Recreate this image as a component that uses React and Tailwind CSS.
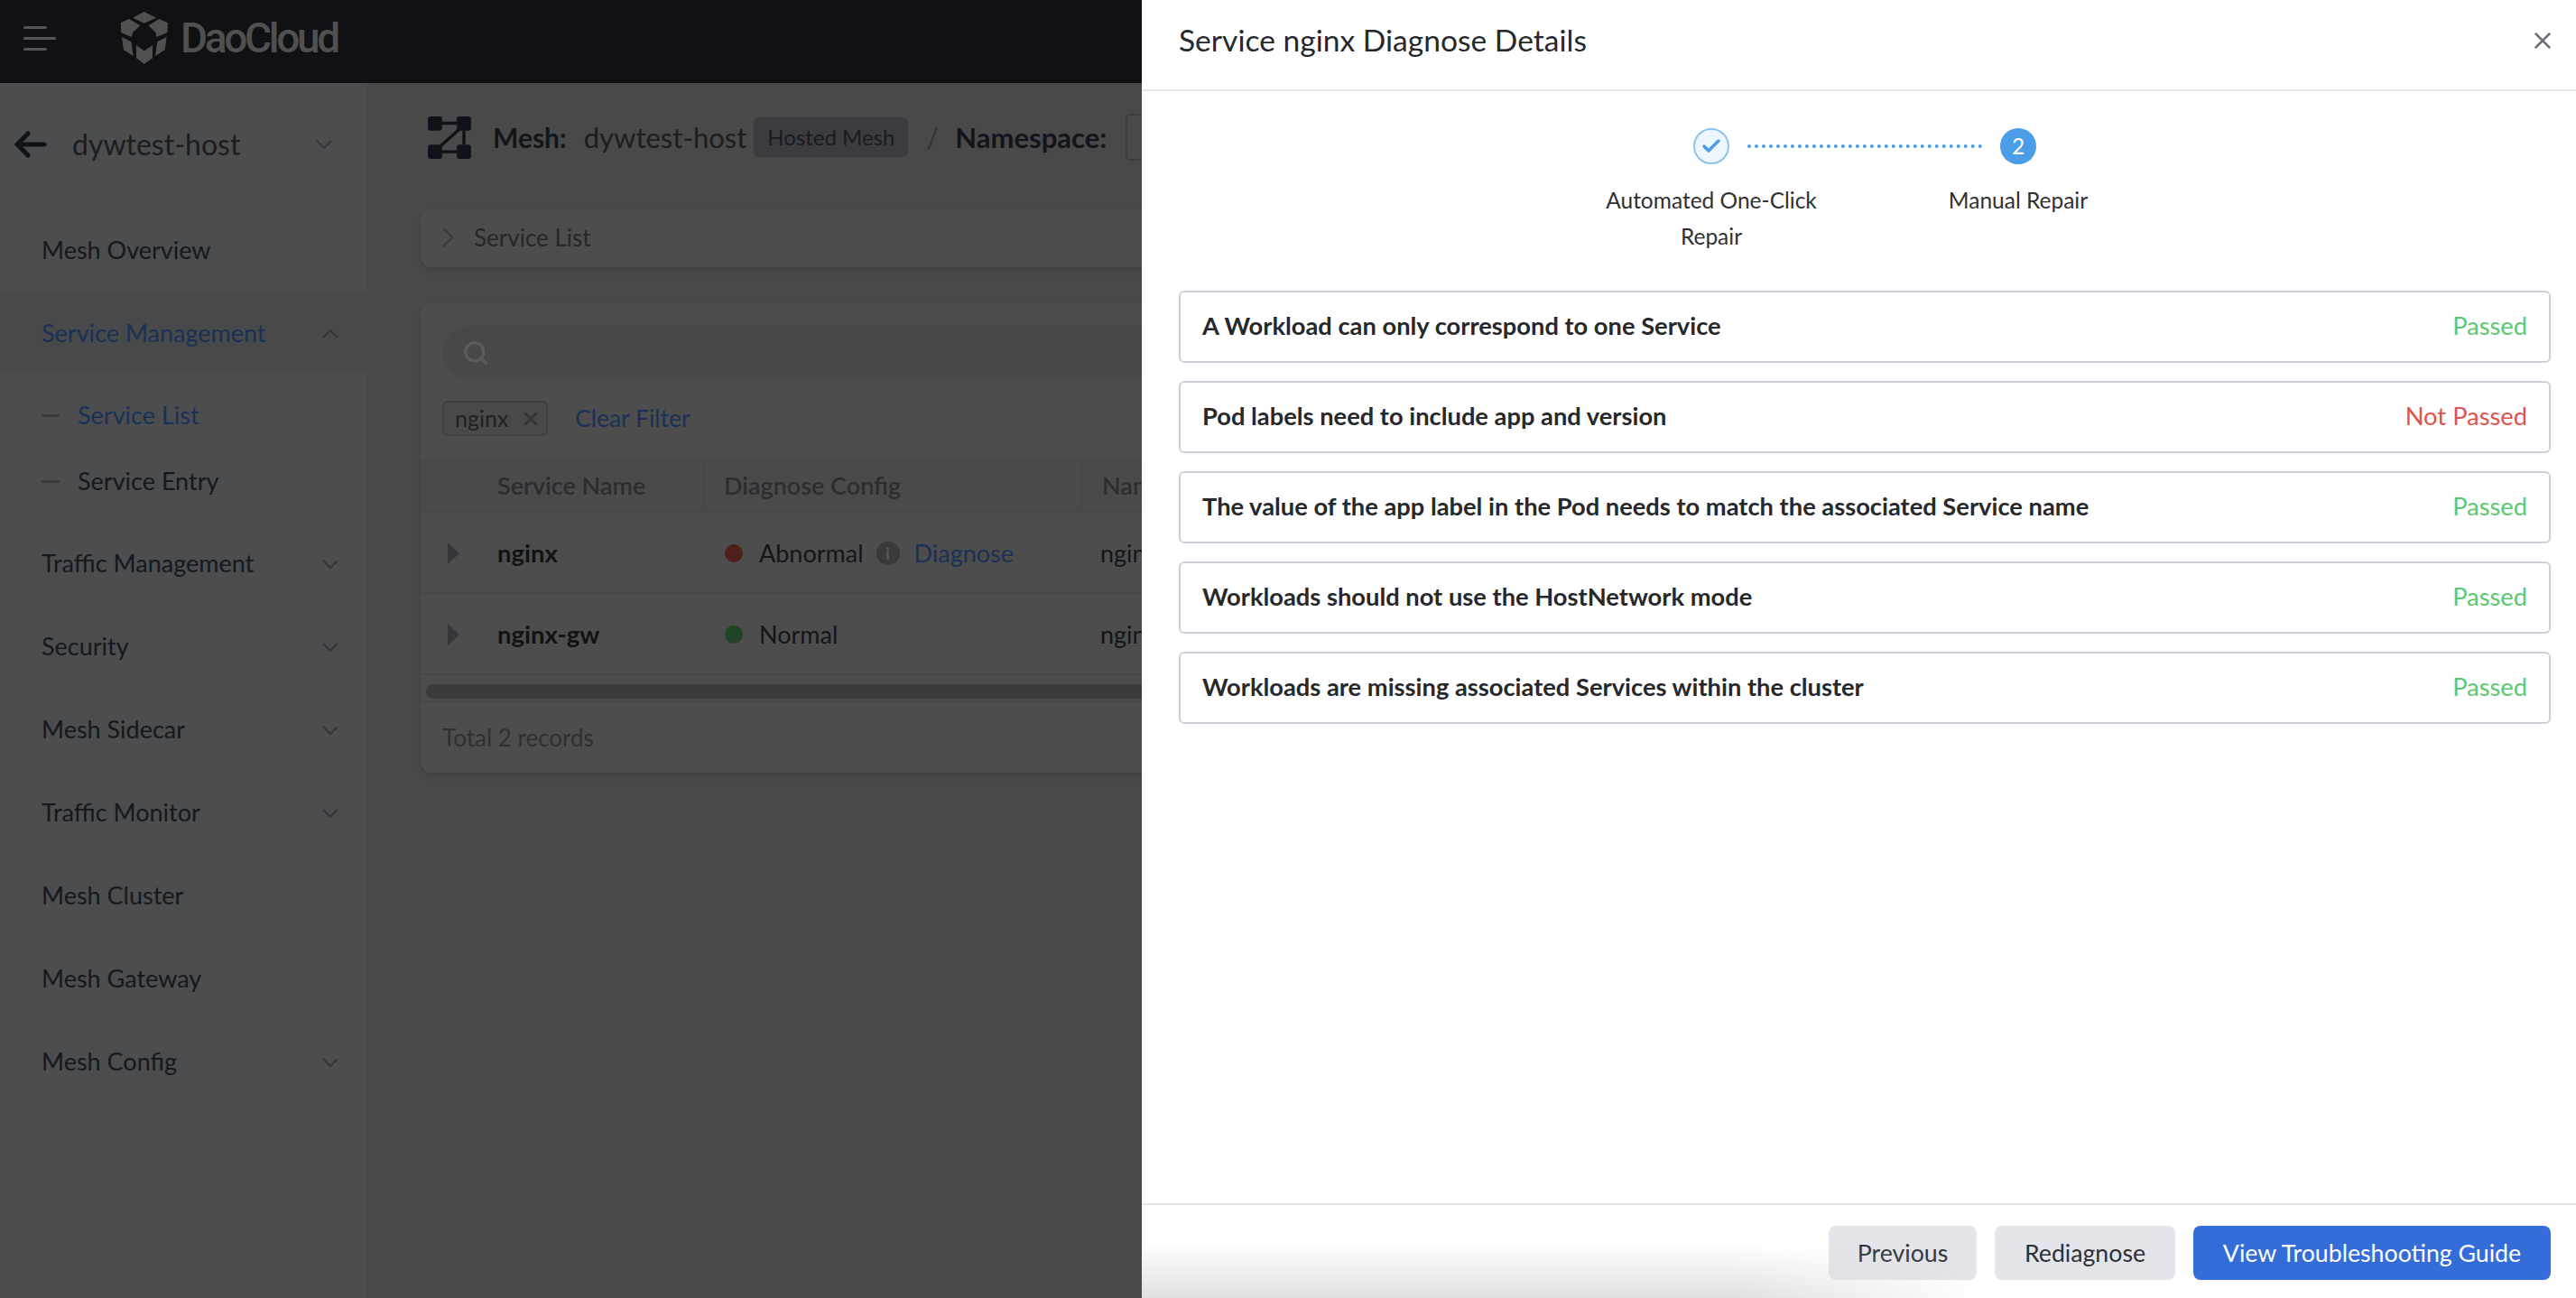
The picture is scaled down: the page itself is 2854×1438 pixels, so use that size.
import React from 'react';
import { Search, X, Check } from 'lucide-react';

const navBelow = [
  { label: 'Traffic Management', arrow: true },
  { label: 'Security', arrow: true },
  { label: 'Mesh Sidecar', arrow: true },
  { label: 'Traffic Monitor', arrow: true },
  { label: 'Mesh Cluster' },
  { label: 'Mesh Gateway' },
  { label: 'Mesh Config', arrow: true },
];

const checks = [
  { text: 'A Workload can only correspond to one Service', ok: true },
  { text: 'Pod labels need to include app and version', ok: false },
  { text: 'The value of the app label in the Pod needs to match the associated Service name', ok: true },
  { text: 'Workloads should not use the HostNetwork mode', ok: true },
  { text: 'Workloads are missing associated Services within the cluster', ok: true },
];

const Chevron = ({ up, className }) => (
  <svg width="18" height="10" viewBox="0 0 18 10" className={className}>
    <polyline
      points={up ? '1,9 9,1 17,9' : '1,1 9,9 17,1'}
      fill="none"
      stroke="#35373a"
      strokeWidth="2"
    />
  </svg>
);

const Logo = () => (
  <svg width="54" height="60" viewBox="38 36 162 178" fill="#505050">
    <polygon points="118,38 158,58 118,76 80,58" />
    <polygon points="40,75 68,62 105,84 80,108 76,122 42,108" />
    <polygon points="197,75 168,62 132,84 157,108 158,122 195,108" />
    <polygon points="44,122 75,138 82,185 50,165" />
    <polygon points="193,122 162,138 155,185 187,165" />
    <polygon points="92,150 118,168 146,150 146,192 118,212 92,192" />
  </svg>
);

const MeshIcon = () => (
  <svg width="48" height="47" viewBox="38 26 140 138" fill="#0f1218" stroke="none">
    <rect x="38" y="26" width="46" height="46" rx="8" />
    <rect x="132" y="26" width="46" height="46" rx="8" />
    <rect x="38" y="118" width="46" height="46" rx="8" />
    <rect x="132" y="118" width="46" height="46" rx="8" />
    <path d="M84 48H132M84 141H132M142 66L70 130M155 72V118" stroke="#0f1218" strokeWidth="10" fill="none" />
  </svg>
);

const NavRow = ({ label, arrow }) => (
  <div className="h-[92px] pl-[46px] pr-[31px] pt-[3px] flex items-center justify-between text-[#15181d]">
    <span>{label}</span>
    {arrow && <Chevron />}
  </div>
);

const Sidebar = () => (
  <aside className="w-[406px] shrink-0 bg-[#4b4d4f] text-[27px]">
    <div className="h-[138px] mx-4 w-[360px] border-b-2 border-[#484a4c] flex items-center justify-between pr-2">
      <svg width="36" height="30" viewBox="0 0 36 30" fill="none" stroke="#0f1218" strokeWidth="5" strokeLinecap="round" strokeLinejoin="round">
        <path d="M33 15H4M15 3L3 15L15 27" />
      </svg>
      <span className="ml-7 flex-1 text-[32px] text-[#1b1d21]">dywtest-host</span>
      <Chevron />
    </div>
    <NavRow label="Mesh Overview" />
    <div className="h-[92px] bg-[#47494b] pl-[46px] pr-[31px] pt-[3px] flex items-center justify-between text-[#1a3155]">
      <span>Service Management</span>
      <Chevron up />
    </div>
    <div className="py-[9px] pb-[10px]">
      <div className="h-[72px] pl-[46px] pt-[3px] flex items-center text-[#1a3155]">
        <span className="w-5 h-[3px] bg-[#393b3d] mr-5" />
        Service List
      </div>
      <div className="h-[72px] pl-[46px] pt-[5px] flex items-center text-[#15181d]">
        <span className="w-5 h-[3px] bg-[#393b3d] mr-5" />
        Service Entry
      </div>
    </div>
    {navBelow.map((item) => (
      <NavRow key={item.label} label={item.label} arrow={item.arrow} />
    ))}
  </aside>
);

const ServiceRow = ({ name, ns, children }) => (
  <div className="h-[90px] pt-[2px] flex items-center border-b-2 border-[#484848] text-[27px]">
    <div className="w-[85px] pl-[30px] shrink-0">
      <span className="block w-0 h-0 border-y-[12px] border-y-transparent border-l-[13px] border-l-[#34363a]" />
    </div>
    <div className="w-[229px] shrink-0 font-bold text-[#111214] text-[27.5px]">{name}</div>
    <div className="w-[419px] shrink-0 pl-[23px] flex items-center text-[#141518]">{children}</div>
    <div className="pl-[20px] text-[#141518]">{ns}</div>
  </div>
);

const MainPanel = () => (
  <main className="flex-1 min-w-0 bg-[#494949] pl-[60px] pr-7">
    <div className="h-[140px] pl-[8px] pb-5 flex items-center gap-[24px] text-[#12151b]">
      <MeshIcon />
      <div className="flex items-center text-[31px]">
        <span className="font-bold text-[30px]">Mesh:</span>
        <span className="ml-[19px] text-[#1b1d21]">dywtest-host</span>
        <span className="ml-[8px] h-11 w-[171px] rounded-md bg-[#3b3c40] flex items-center justify-center text-[24px] text-[#191b1f]">
          Hosted Mesh
        </span>
        <span className="ml-[20px] text-[#333]">/</span>
        <span className="ml-[18px] font-bold">Namespace:</span>
        <span className="ml-[21px] w-[60px] h-[52px] rounded-md border-2 border-[#3d3d3d]" />
      </div>
    </div>
    <div className="h-16 rounded-xl bg-[#4d4d4d] shadow-md flex items-center pl-[24px] pb-[2px] gap-[23px] text-[26px] text-[#26272a]">
      <svg width="12" height="24" viewBox="0 0 12 24" fill="none" stroke="#3a3a3a" strokeWidth="2">
        <path d="M1 2L11 12L1 22" />
      </svg>
      Service List
    </div>
    <div className="mt-10 h-[520px] rounded-xl bg-[#4d4d4d] shadow-md overflow-hidden">
      <div className="pt-[25px] px-[24px]">
        <div className="h-[59px] rounded-full bg-[#484848] flex items-center pl-[22px]">
          <Search size={30} color="#5c5c5c" strokeWidth={2.5} />
        </div>
        <div className="mt-6 h-[39px] flex items-center text-[26px]">
          <span className="h-[39px] w-[117px] rounded-md border-2 border-[#3f3f3f] bg-[#4a4a4a] flex items-center justify-between pl-3 pr-[5px] text-[25px] text-[#1f2023]">
            nginx
            <X size={24} color="#333333" strokeWidth={2.5} />
          </span>
          <span className="ml-[30px] text-[26.5px] text-[#1a3155]">Clear Filter</span>
        </div>
      </div>
      <div className="mt-[26px] h-[59px] bg-[#4a4a4a] border-y-2 border-[#474747] flex items-center text-[27px] font-semibold text-[#2c2d30]">
        <div className="w-[314px] h-full shrink-0 pl-[85px] border-r-2 border-[#474747] flex items-center">Service Name</div>
        <div className="w-[419px] h-full shrink-0 pl-[22px] border-r-2 border-[#474747] flex items-center">Diagnose Config</div>
        <div className="pl-[22px]">Namespace</div>
      </div>
      <ServiceRow name="nginx" ns="nginx">
        <span className="w-5 h-5 rounded-full bg-[#4f1f1c]" />
        <span className="ml-[18px]">Abnormal</span>
        <span className="ml-[14px] w-[26px] h-[26px] rounded-full bg-[#3a3a3a] flex items-center justify-center text-[18px] font-bold text-[#5a5a5a]">i</span>
        <span className="ml-4 text-[#1a3155]">Diagnose</span>
      </ServiceRow>
      <ServiceRow name="nginx-gw" ns="nginx">
        <span className="w-5 h-5 rounded-full bg-[#1f4426]" />
        <span className="ml-[18px]">Normal</span>
      </ServiceRow>
      <div className="h-[30px] px-[6px] pt-[10px] border-b-2 border-[#484848]">
        <div className="h-4 w-full rounded-lg bg-[#3b3b3b]" />
      </div>
      <div className="pl-[24px] pt-[20px] text-[26px] text-[#2f3033]">Total 2 records</div>
    </div>
  </main>
);

const DrawerPanel = () => (
  <section className="absolute top-0 right-0 bottom-0 w-[1589px] bg-white flex flex-col text-[#2f3033]">
    <div className="h-[101px] shrink-0 border-b-2 border-[#e5e6ec] pl-[41px] pr-[22px] pb-[10px] flex items-center justify-between">
      <h2 className="text-[33.6px] text-[#26282c]">Service nginx Diagnose Details</h2>
      <X size={30} color="#6c727c" />
    </div>
    <div className="flex-1 pl-[41px] pr-7">
      <div className="pt-[41px] flex justify-center text-[24.5px] leading-10 text-center">
        <div className="w-[272px] flex flex-col items-center">
          <span className="w-10 h-10 rounded-full bg-[#edf6fd] border-2 border-[#8cc4ee] flex items-center justify-center">
            <Check size={24} color="#4a9de6" strokeWidth={3.5} />
          </span>
          <p className="mt-[20px]">Automated One-Click Repair</p>
        </div>
        <div className="w-[68px] pt-[18px]">
          <div className="relative -left-[96px] w-[260px] h-1 border-t-4 border-dotted border-[#4a9de6]" />
        </div>
        <div className="w-[272px] flex flex-col items-center">
          <span className="w-10 h-10 rounded-full bg-[#4a9de6] text-white flex items-center justify-center">2</span>
          <p className="mt-[20px]">Manual Repair</p>
        </div>
      </div>
      <div className="mt-[40px] flex flex-col gap-5">
        {checks.map((item) => (
          <div
            key={item.text}
            className="h-20 rounded-md border-2 border-[#cdd0da] px-6 pb-[2px] flex items-center justify-between text-[27.3px]"
          >
            <span className="font-bold text-[#26282c]">{item.text}</span>
            <span className={item.ok ? 'text-[#5cc870]' : 'text-[#e0524d]'}>{item.ok ? 'Passed' : 'Not Passed'}</span>
          </div>
        ))}
      </div>
    </div>
    <div className="h-[105px] shrink-0 border-t-2 border-[#e5e6ec] pr-7 flex items-start justify-end gap-5 pt-[23px] text-[26.7px]">
      <button className="h-[60px] w-[164px] rounded-lg bg-[#e4e5ea] text-[#2f3033]">Previous</button>
      <button className="h-[60px] w-[200px] rounded-lg bg-[#e4e5ea] text-[#2f3033]">Rediagnose</button>
      <button className="h-[60px] w-[396px] rounded-lg bg-[#356dd8] text-white">View Troubleshooting Guide</button>
    </div>
    {/* grey fade along the bottom edge */}
    <div className="absolute left-0 bottom-0 w-[935px] h-[60px] pointer-events-none bg-gradient-to-t from-[#dcdcdc]/90 to-transparent [mask-image:linear-gradient(to_right,black_70%,transparent)]" />
  </section>
);

const App = () => {
  return (
    <div className="relative w-[2854px] h-[1438px] overflow-hidden font-['Lato','Noto_Sans',sans-serif]">
      <header className="h-[92px] bg-[#0f1114] flex items-center pl-[26px] pb-2">
        <div className="w-9 flex flex-col gap-[9px]">
          <span className="w-[26px] h-[3px] rounded-full bg-[#555]" />
          <span className="w-9 h-[3px] rounded-full bg-[#555]" />
          <span className="w-[26px] h-[3px] rounded-full bg-[#555]" />
        </div>
        <div className="ml-[71px] flex"><Logo /></div>
        <span className="ml-[13px] text-[46px] font-medium tracking-[-3.3px] text-[#505050] font-['Roboto',sans-serif]">DaoCloud</span>
      </header>
      <div className="flex h-[1346px]">
        <Sidebar />
        <MainPanel />
      </div>
      <DrawerPanel />
    </div>
  );
};

export default App;
